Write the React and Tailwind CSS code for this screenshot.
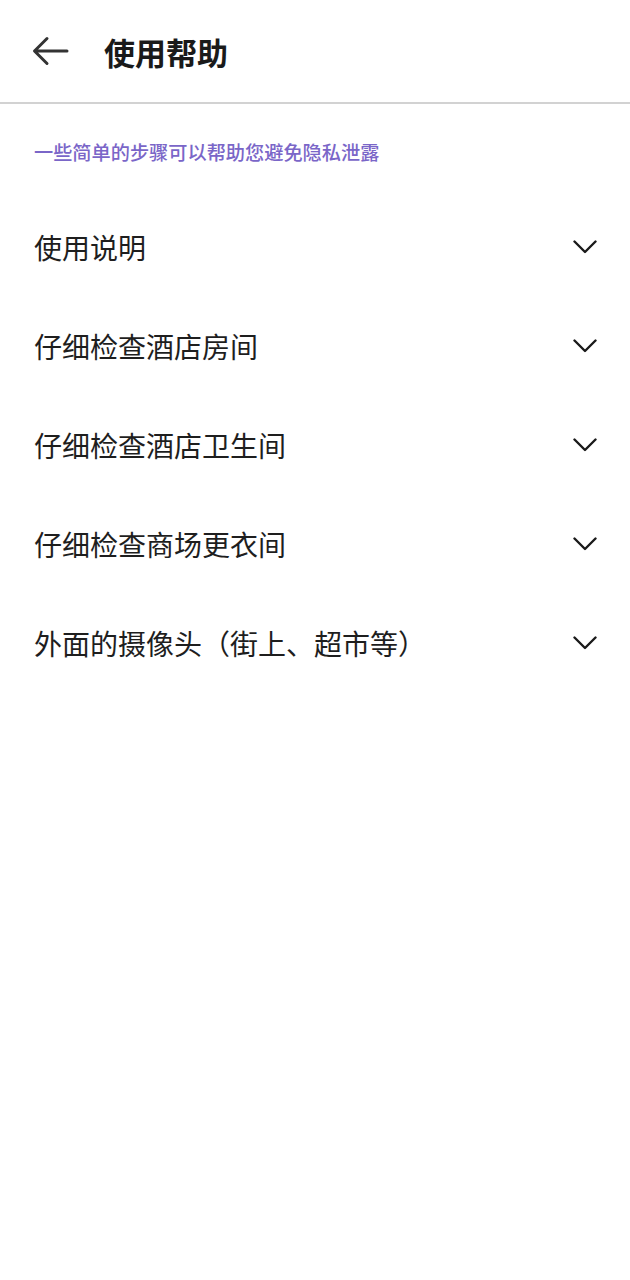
import React from 'react';

const items = [
    '使用说明',
    '仔细检查酒店房间',
    '仔细检查酒店卫生间',
    '仔细检查商场更衣间',
    '外面的摄像头（街上、超市等）',
];

const font = { fontFamily: '"Noto Sans CJK SC", "Noto Sans", sans-serif' };

const Chevron = () => (
    <svg width="24" height="14" viewBox="0 0 24 14" fill="none" className="shrink-0">
        <path d="M1.5 1.5 L12 12 L22.5 1.5" stroke="#1a1a1a" strokeWidth="2.4" strokeLinecap="round" strokeLinejoin="round" />
    </svg>
);

const BackArrow = () => (
    <svg width="37" height="30" viewBox="0 0 37 30" fill="none">
        <path d="M35 15 H3 M15 2.5 L2.5 15 L15 27.5" stroke="#333333" strokeWidth="3" strokeLinecap="round" strokeLinejoin="round" />
    </svg>
);

const App = () => {
    return (
        <div className="min-h-screen w-[630px] bg-white" style={font}>
            {/* Header */}
            <div className="h-[104px] flex items-center border-b-2 border-[#d2d2d2] pl-[32px]">
                <BackArrow />
                <h1 className="ml-[35px] text-[31px] font-bold text-[#1a1a1a] leading-none">使用帮助</h1>
            </div>

            {/* Subtitle */}
            <div className="pt-[36px] pb-[33px] px-[34px]">
                <p className="text-[19.2px] leading-[24px] font-medium text-[#7a66c8]">一些简单的步骤可以帮助您避免隐私泄露</p>
            </div>

            {/* Items */}
            <div>
                {items.map((t) => (
                    <div key={t} className="h-[99px] flex items-center justify-between pl-[34px] pr-[33px]">
                        <span className="text-[28px] leading-none text-[#1e1e1e]">{t}</span>
                        <Chevron />
                    </div>
                ))}
            </div>
        </div>
    );
};

export default App;
